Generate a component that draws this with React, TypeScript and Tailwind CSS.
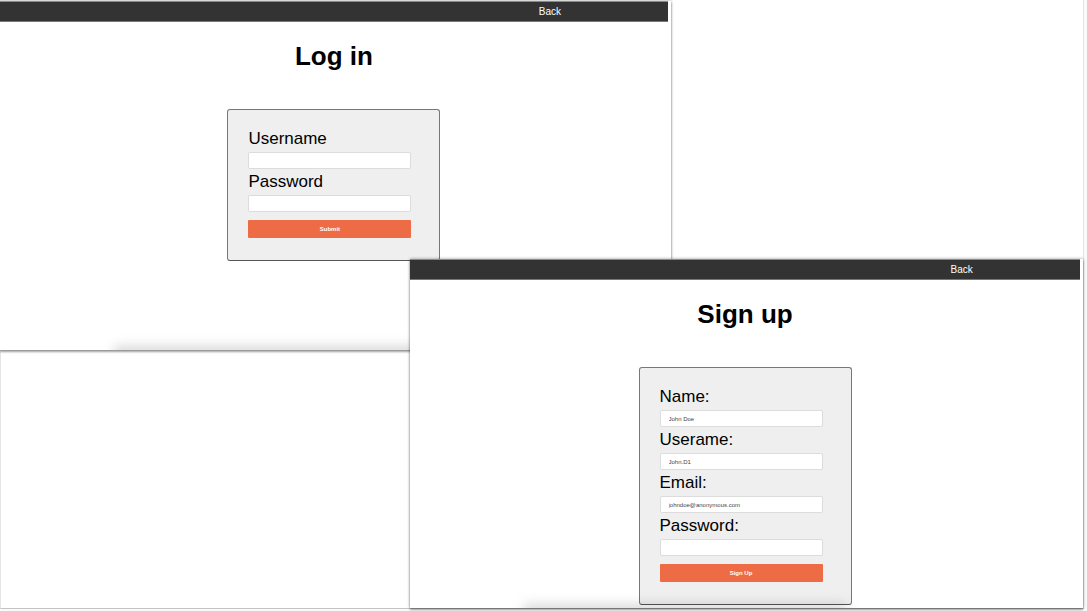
import type { ReactNode } from 'react';

type Field = { id: string; label: string; type: string; value?: string };

const loginFields: Field[] = [
  { id: 'login-username', label: 'Username', type: 'text' },
  { id: 'login-password', label: 'Password', type: 'password' },
];

const signupFields: Field[] = [
  { id: 'signup-name', label: 'Name:', type: 'text', value: 'John Doe' },
  { id: 'signup-username', label: 'Userame:', type: 'text', value: 'John.D1' },
  { id: 'signup-email', label: 'Email:', type: 'email', value: 'johndoe@anonymous.com' },
  { id: 'signup-password', label: 'Password:', type: 'password' },
];

function FormCard({ fields, action }: { fields: Field[]; action: string }) {
  return (
    <form
      onSubmit={(e) => e.preventDefault()}
      className="mx-auto flex w-[213px] flex-col rounded-[3px] border border-[#777] border-b-[#555] bg-[#efefef] pt-[19px] pr-7 pb-[22px] pl-5"
    >
      <div className="flex flex-col gap-[3px]">
        {fields.map((f) => (
          <div key={f.id} className="flex flex-col gap-[3px]">
            <label htmlFor={f.id} className="text-[17px] leading-5 text-black">
              {f.label}
            </label>
            <input
              id={f.id}
              type={f.type}
              placeholder={f.value}
              className="h-[17px] w-full rounded-[2px] border border-[#dcdcdc] bg-white px-2 text-[6px] text-[#333] outline-none placeholder:text-[#444]"
            />
          </div>
        ))}
      </div>
      <button
        type="submit"
        className="mt-2 h-[18px] rounded-[1px] bg-[#ee6c45] text-center text-[6px] font-bold text-white"
      >
        {action}
      </button>
    </form>
  );
}

function Window({ title, className, children }: { title: string; className: string; children: ReactNode }) {
  return (
    <section
      className={`relative col-start-1 row-start-1 self-start overflow-hidden bg-white pr-[3px] shadow-[0_0_3px_rgba(0,0,0,0.4),0_2px_2px_rgba(0,0,0,0.3)] ${className}`}
    >
      <nav className="flex h-[21px] items-center justify-end border-y border-t-[#8a8a8a] border-b-[#777] bg-[#333] pr-[16%]">
        <a href="#back" className="text-[10px] leading-4 text-white">
          Back
        </a>
      </nav>
      <h1 className="mt-[18px] mb-[37px] text-center text-[26px] leading-8 font-bold text-black">{title}</h1>
      {children}
      <div className="pointer-events-none absolute -bottom-3 left-[17%] h-4 w-[48%] bg-black/15 blur-[6px]" />
    </section>
  );
}

export default function App() {
  return (
    <div className="overflow-hidden bg-[#fafafa] pr-[3px] pb-[2px] font-['Liberation_Sans',Arial,sans-serif]">
      <main className="grid border-r border-b border-l border-r-[#e4e4e4] border-b-[#c4c4c4] border-l-[#e4e4e4] bg-white">
        <Window title="Log in" className="-ml-px mt-px w-[62%] justify-self-start pb-[89px]">
          <FormCard fields={loginFields} action="Submit" />
        </Window>
        <Window title="Sign up" className="mt-[259px] w-[62.2%] justify-self-end pb-[3px]">
          <FormCard fields={signupFields} action="Sign Up" />
        </Window>
      </main>
    </div>
  );
}
